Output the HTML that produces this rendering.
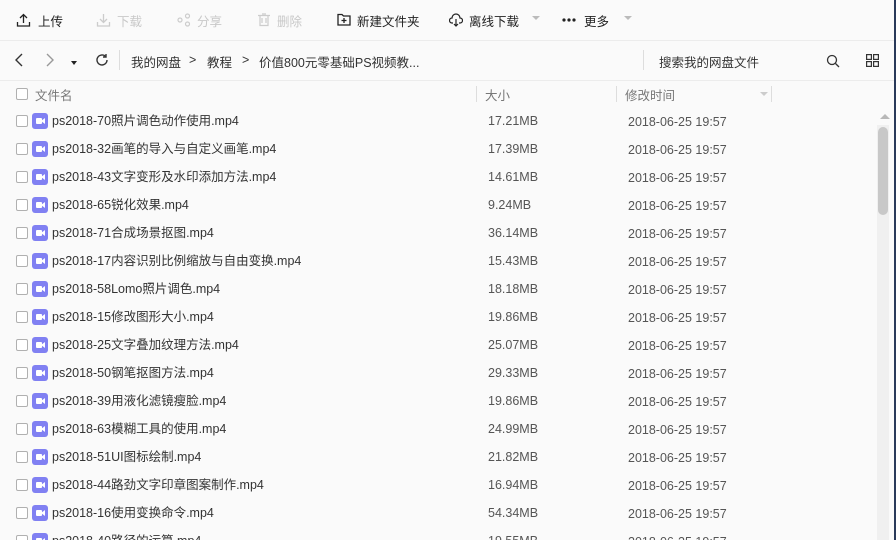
<!DOCTYPE html>
<html><head><meta charset="utf-8"><style>
*{margin:0;padding:0;box-sizing:border-box}
html,body{width:896px;height:540px;overflow:hidden}
body{background:#fafafa;font-family:"Liberation Sans","Noto Sans CJK SC",sans-serif;font-size:12.5px;color:#333;position:relative}
.abs{position:absolute;white-space:nowrap}
.tb{top:11px;font-size:12.5px;color:#222}
.dis{color:#c8c8c8}
.hl{position:absolute;left:0;width:896px;height:1px;background:#ececec}
.cb{position:absolute;left:16px;width:12px;height:12px;border:1px solid #b0b0b0;border-radius:2px;background:#fff}
.ic{position:absolute;left:32px;width:16px;height:16px;background:#8080f2;border-radius:3px}
.ic:after{content:"";position:absolute;left:4px;top:5px;width:6px;height:6px;background:#fff;border-radius:1px}
.ic:before{content:"";position:absolute;left:9px;top:5px;border-right:4px solid #fff;border-top:3px solid transparent;border-bottom:3px solid transparent;height:0}
.nm{position:absolute;left:52px;color:#333}
.sz{position:absolute;left:488px;color:#555}
.tm{position:absolute;left:628px;color:#555}
</style></head><body>
<svg class="abs" style="left:16px;top:13px" width="15" height="14" viewBox="0 0 15 14" fill="none" stroke="#222" stroke-width="1.3"><path d="M7.5 10V2M4 5l3.5-3.5L11 5M1.5 9v4h12V9"/></svg>
<div class="abs tb" style="left:38px">上传</div>
<svg class="abs" style="left:96px;top:13px" width="15" height="14" viewBox="0 0 15 14" fill="none" stroke="#ccc" stroke-width="1.3"><path d="M7.5 1v8M4 6l3.5 3.5L11 6M1.5 9v4h12V9"/></svg>
<div class="abs tb dis" style="left:117px">下载</div>
<svg class="abs" style="left:177px;top:13px" width="14" height="14" fill="none" stroke="#ccc" stroke-width="1.2"><circle cx="3" cy="7" r="2"/><circle cx="10.5" cy="3" r="2"/><circle cx="10.5" cy="11" r="2"/></svg>
<div class="abs tb dis" style="left:197px">分享</div>
<svg class="abs" style="left:257px;top:13px" width="14" height="14" fill="none" stroke="#ccc" stroke-width="1.2"><path d="M1 2.5h12M3 2.5v10h8v-10M5 5v5M9 5v5M5 1h4"/></svg>
<div class="abs tb dis" style="left:277px">删除</div>
<svg class="abs" style="left:337px;top:13px" width="14" height="13" fill="none" stroke="#222" stroke-width="1.3"><path d="M1 1.5h4l1.5 1.5H13v9H1zM7 5v5M4.5 7.5h5"/></svg>
<div class="abs tb" style="left:357px">新建文件夹</div>
<svg class="abs" style="left:449px;top:13px" width="14" height="14" fill="none" stroke="#222" stroke-width="1.2"><path d="M4 10H3a2.5 2.5 0 0 1 0-5 4 4 0 0 1 8 0 2.5 2.5 0 0 1 0 5h-1M7 6v7M5 11l2 2 2-2"/></svg>
<div class="abs tb" style="left:469px">离线下载</div>
<div class="abs" style="left:532px;top:16px;border-top:4px solid #bbb;border-left:4px solid transparent;border-right:4px solid transparent"></div>
<svg class="abs" style="left:562px;top:18px" width="14" height="4" fill="#222"><circle cx="2" cy="2" r="1.6"/><circle cx="7" cy="2" r="1.6"/><circle cx="12" cy="2" r="1.6"/></svg>
<div class="abs tb" style="left:584px">更多</div>
<div class="abs" style="left:624px;top:16px;border-top:4px solid #bbb;border-left:4px solid transparent;border-right:4px solid transparent"></div>
<div class="hl" style="top:40px"></div>
<svg class="abs" style="left:14px;top:53px" width="10" height="14" fill="none" stroke="#333" stroke-width="1.4"><path d="M8 1L2 7l6 6"/></svg>
<svg class="abs" style="left:45px;top:53px" width="10" height="14" fill="none" stroke="#999" stroke-width="1.4"><path d="M2 1l6 6-6 6"/></svg>
<div class="abs" style="left:71px;top:61px;border-top:4px solid #222;border-left:3px solid transparent;border-right:3px solid transparent"></div>
<svg class="abs" style="left:95px;top:53px" width="14" height="14" fill="none" stroke="#333" stroke-width="1.4"><path d="M12 7a5 5 0 1 1-1.5-3.6"/><path d="M11 1v3H8" /></svg>
<div class="abs" style="left:119px;top:50px;width:1px;height:20px;background:#ddd"></div>
<div class="abs" style="left:131px;top:52px">我的网盘</div>
<div class="abs" style="left:189px;top:53px">&gt;</div>
<div class="abs" style="left:207px;top:52px">教程</div>
<div class="abs" style="left:242px;top:53px">&gt;</div>
<div class="abs" style="left:259px;top:52px">价值800元零基础PS视频教...</div>
<div class="abs" style="left:643px;top:50px;width:1px;height:20px;background:#ddd"></div>
<div class="abs" style="left:659px;top:52px">搜索我的网盘文件</div>
<svg class="abs" style="left:826px;top:54px" width="14" height="14" fill="none" stroke="#333" stroke-width="1.3"><circle cx="6" cy="6" r="4.5"/><path d="M9.5 9.5l3.5 3.5"/></svg>
<svg class="abs" style="left:866px;top:54px" width="13" height="13" fill="none" stroke="#333" stroke-width="1.2"><rect x=".6" y=".6" width="4.8" height="4.8"/><rect x="7.6" y=".6" width="4.8" height="4.8"/><rect x=".6" y="7.6" width="4.8" height="4.8"/><rect x="7.6" y="7.6" width="4.8" height="4.8"/></svg>
<div class="hl" style="top:80px"></div>
<div class="cb" style="top:88px"></div>
<div class="abs" style="left:35px;top:85px;color:#777">文件名</div>
<div class="abs" style="left:476px;top:86px;width:1px;height:16px;background:#ddd"></div>
<div class="abs" style="left:485px;top:85px;color:#777">大小</div>
<div class="abs" style="left:616px;top:86px;width:1px;height:16px;background:#ddd"></div>
<div class="abs" style="left:625px;top:85px;color:#777">修改时间</div>
<div class="abs" style="left:760px;top:92px;border-top:4px solid #ccc;border-left:4px solid transparent;border-right:4px solid transparent"></div>
<div class="abs" style="left:771px;top:86px;width:1px;height:16px;background:#ddd"></div>
<div id="rows"></div>
<div class="abs" style="left:877px;top:125px;width:12px;height:415px;background:#f0f0f0"></div>
<div class="abs" style="left:880px;top:114px;border-bottom:5px solid #b8b8b8;border-left:5px solid transparent;border-right:5px solid transparent"></div>
<div class="abs" style="left:878px;top:127px;width:10px;height:88px;background:#c8c8c8;border-radius:5px"></div>
<div class="abs" style="left:894px;top:0;width:2px;height:540px;background:#2a3a5a"></div>
<script>
var d=[["70照片调色动作使用","17.21MB"],["32画笔的导入与自定义画笔","17.39MB"],["43文字变形及水印添加方法","14.61MB"],["65锐化效果","9.24MB"],["71合成场景抠图","36.14MB"],["17内容识别比例缩放与自由变换","15.43MB"],["58Lomo照片调色","18.18MB"],["15修改图形大小","19.86MB"],["25文字叠加纹理方法","25.07MB"],["50钢笔抠图方法","29.33MB"],["39用液化滤镜瘦脸","19.86MB"],["63模糊工具的使用","24.99MB"],["51UI图标绘制","21.82MB"],["44路劲文字印章图案制作","16.94MB"],["16使用变换命令","54.34MB"],["40路径的运算","19.55MB"]];
var h="";d.forEach(function(r,i){var y=113+i*28;
h+='<div class="cb" style="top:'+(y+2)+'px"></div><div class="ic" style="top:'+y+'px"></div><div class="nm" style="top:'+(y-3)+'px">ps2018-'+r[0]+'.mp4</div><div class="sz" style="top:'+(y+1)+'px">'+r[1]+'</div><div class="tm" style="top:'+(y+2)+'px">2018-06-25 19:57</div>';});
document.getElementById("rows").innerHTML=h;
</script>
</body></html>
